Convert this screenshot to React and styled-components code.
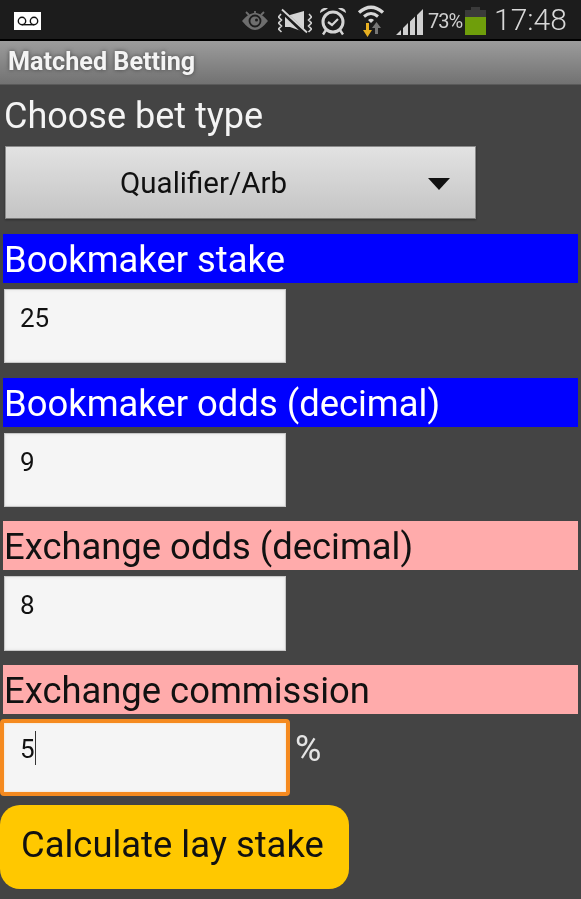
import React from "react";
import styled, { createGlobalStyle } from "styled-components";

const GlobalStyle = createGlobalStyle`
  html, body { margin: 0; padding: 0; background: #444444; }
  body { font-family: Roboto, "Liberation Sans", sans-serif; }
`;

const fields = [
  { label: "Bookmaker stake", value: "25", tone: "blue" },
  { label: "Bookmaker odds (decimal)", value: "9", tone: "blue" },
  { label: "Exchange odds (decimal)", value: "8", tone: "pink" },
];

const App = () => {
  return (
    <Page>
      <GlobalStyle />
      <StatusBar>
        <Voicemail>
          <svg width="22" height="10" viewBox="0 0 22 10">
            <circle cx="5" cy="5" r="3.7" fill="none" stroke="#111" strokeWidth="1.4" />
            <circle cx="17" cy="5" r="3.7" fill="none" stroke="#111" strokeWidth="1.4" />
            <path d="M5 8.700h12" stroke="#111" strokeWidth="1.4" />
          </svg>
        </Voicemail>
        <StatusIcons>
          {/* every icon is drawn on the full bar height, so y is the screen y */}
          <StatusIcon $gap={0} width="26" height="39" viewBox="0 0 26 39">
            <path d="M0 21C5 15 9 13 13 13s8 2 13 8c-5 6-9 9-13 9S5 27 0 21z" fill="#6e6e6e" />
            <circle cx="13" cy="21" r="5.500" fill="none" stroke="#1c1c1c" strokeWidth="1.800" />
            <circle cx="14.500" cy="20" r="1.500" fill="#1c1c1c" />
            <path d="M13 11v3M4 12l3 3M22 12l-3 3" stroke="#6e6e6e" strokeWidth="1.800" />
          </StatusIcon>
          <StatusIcon $gap={10} width="34" height="39" viewBox="0 0 34 39">
            <path d="M7 15h5l14-4v21l-14-5H7z" fill="#d4d4d4" />
            <path d="M3 14l-2.500 3 3 3-3 3 3 3-3 3 3 3M31 14l2.500 3-3 3 3 3-3 3 3 3-3 3" fill="none" stroke="#cfcfcf" strokeWidth="1.600" />
            <path d="M4 11l24 23" stroke="#1c1c1c" strokeWidth="4.500" />
            <path d="M4 9.500l25 23" stroke="#d4d4d4" strokeWidth="1.800" />
          </StatusIcon>
          <StatusIcon $gap={7} width="28" height="39" viewBox="0 0 28 39">
            <circle cx="14" cy="22" r="10" fill="none" stroke="#d4d4d4" strokeWidth="3" />
            <path d="M9 22l4 3 6-6" fill="none" stroke="#d4d4d4" strokeWidth="2.200" />
            <path d="M1 13c0-4 4-6 8-4.500zM27 13c0-4-4-6-8-4.500z" fill="#d4d4d4" />
            <path d="M7 30l-3 4.500M21 30l3 4.500" stroke="#d4d4d4" strokeWidth="2.400" />
          </StatusIcon>
          <StatusIcon $gap={10} width="28" height="39" viewBox="0 0 28 39">
            <path d="M2 12.500Q14 2 26 12.500" fill="none" stroke="#d8d8d8" strokeWidth="3.400" />
            <path d="M7 16.500Q14 10.500 21 16.500" fill="none" stroke="#d8d8d8" strokeWidth="3" />
            <path d="M11 20q3-2.500 6 0l-3 3z" fill="#d8d8d8" />
            <path d="M9 23h3v7h3l-4.500 7L6 30h3z" fill="#e8b021" />
            <path d="M19.500 22l4.500 6h-3v6h-3v-6h-3z" fill="#777" />
          </StatusIcon>
          <StatusIcon $gap={11} width="27" height="39" viewBox="0 0 27 39">
            <path d="M0 35l5-5v5zM7 35v-7l5-5v12zM14 35V21.500l5-5V35zM21 35V15l6-6v26z" fill="#d0d0d0" />
          </StatusIcon>
          <Percent>73%</Percent>
          <StatusIcon $gap={4} width="21" height="39" viewBox="0 0 21 39">
            <path d="M6 7h9v3h6v7H0v-7h6z" fill="#3a3a3a" />
            <rect x="0" y="17" width="21" height="18" fill="#6f9e0b" />
          </StatusIcon>
        </StatusIcons>
        <Clock>17:48</Clock>
      </StatusBar>
      <TitleBar>Matched Betting</TitleBar>
      <Content>
        <Heading>Choose bet type</Heading>
        <Spinner>
          <SpinnerText>Qualifier/Arb</SpinnerText>
          <SpinnerArrow />
        </Spinner>
        {fields.map((field) => (
          <Field key={field.label}>
            <Label $tone={field.tone}>{field.label}</Label>
            <InputBox>{field.value}</InputBox>
          </Field>
        ))}
        <Field>
          <Label $tone="pink">Exchange commission</Label>
          <InputRow>
            <InputBox $focused>
              5<Caret />
            </InputBox>
            <Unit>%</Unit>
          </InputRow>
        </Field>
        <CalcButton>Calculate lay stake</CalcButton>
      </Content>
    </Page>
  );
};

const Page = styled.div`
  width: 581px;
  height: 899px;
  overflow: hidden;
  background: #444444;
  display: flex;
  flex-direction: column;
  filter: blur(0.45px);
`;
const StatusBar = styled.div`
  height: 41px;
  flex: none;
  box-sizing: border-box;
  border-bottom: 2px solid #000;
  background: #1c1c1c;
  display: flex;
  align-items: center;
  padding: 0 15px 0 14px;
`;
const Voicemail = styled.div`
  width: 27px;
  height: 18px;
  margin-top: 3px;
  background: #fff;
  display: flex;
  align-items: center;
  justify-content: center;
`;
const StatusIcons = styled.div`
  margin-left: auto;
  display: flex;
  align-items: center;
`;
const StatusIcon = styled.svg`
  display: block;
  margin-left: ${(p) => p.$gap}px;
`;
const Percent = styled.span`
  color: #cfcfcf;
  font-size: 20px;
  letter-spacing: -1px;
  margin: 3px 0 0 5px;
  width: 33px;
`;
const Clock = styled.div`
  color: #d8d8d8;
  font-size: 30px;
  font-weight: 300;
  margin-left: 8px;
  width: 72px;
`;
const TitleBar = styled.div`
  height: 44px;
  flex: none;
  box-sizing: border-box;
  padding: 6px 0 0 8px;
  background: linear-gradient(#9c9c9c, #727272);
  border-bottom: 1px solid #5a5a5a;
  color: #f4f4f4;
  font-size: 25.200px;
  font-weight: 700;
  line-height: 30px;
  text-shadow: 0 0 4px #444;
`;
const Content = styled.div`
  display: flex;
  flex-direction: column;
  flex: 1;
`;
const Heading = styled.div`
  color: #f4f4f4;
  font-size: 36px;
  line-height: 40px;
  margin: 11px 0 0 4px;
`;
const Spinner = styled.div`
  position: relative;
  box-sizing: border-box;
  width: 471px;
  height: 73px;
  margin: 10px 0 0.800px 5px;
  padding-right: 74px;
  display: flex;
  align-items: center;
  justify-content: center;
  background: linear-gradient(#e2e2e2, #c4c4c4);
  border: 1px solid #8c8c8c;
  border-bottom-color: #777;
  box-shadow: 0 1px 2px rgba(0, 0, 0, 0.35);
`;
const SpinnerText = styled.span`
  color: #111;
  font-size: 29.500px;
`;
const SpinnerArrow = styled.span`
  position: absolute;
  right: 25px;
  top: 31px;
  width: 0;
  height: 0;
  border-left: 11px solid transparent;
  border-right: 11px solid transparent;
  border-top: 12px solid #111;
`;
const Field = styled.div`
  display: flex;
  flex-direction: column;
  margin-top: 14.200px;
`;
const Label = styled.div`
  box-sizing: border-box;
  width: 575px;
  height: 49px;
  margin-left: 3px;
  padding-left: 1px;
  font-size: 36.400px;
  line-height: 52px;
  background: ${(p) => (p.$tone === "blue" ? "#0000ff" : "#ffabab")};
  color: ${(p) => (p.$tone === "blue" ? "#fff" : "#111")};
`;
const InputBox = styled.div`
  box-sizing: border-box;
  width: ${(p) => (p.$focused ? "290px" : "282px")};
  height: ${(p) => (p.$focused ? "77px" : "74.500px")};
  margin: ${(p) => (p.$focused ? "5px 0 0 0" : "6px 0 0 4px")};
  padding: ${(p) => (p.$focused ? "11px 0 0 16px" : "13px 0 0 15px")};
  background: #f5f5f5;
  border: ${(p) => (p.$focused ? "4px solid #f58a1f" : "1px solid #c8c8c8")};
  border-radius: ${(p) => (p.$focused ? "4px" : "0")};
  box-shadow: ${(p) => (p.$focused ? "inset 0 0 2px #ffd9a8" : "inset 0 0 3px #e2e2e2")};
  color: #111;
  font-size: 26px;
  line-height: 30px;
  display: flex;
  align-items: flex-start;
`;
const Caret = styled.span`
  width: 1px;
  height: 34px;
  margin-top: -3px;
  background: #333;
`;
const InputRow = styled.div`
  display: flex;
  align-items: flex-start;
`;
const Unit = styled.span`
  color: #e4e4e4;
  font-size: 36px;
  margin: 14px 0 0 5px;
`;
const CalcButton = styled.div`
  box-sizing: border-box;
  width: 349px;
  height: 84px;
  margin-top: 9px;
  padding: 0 0 5px 21px;
  display: flex;
  align-items: center;
  background: #ffc800;
  border-radius: 20px;
  color: #111;
  font-size: 36.400px;
`;

export default App;
